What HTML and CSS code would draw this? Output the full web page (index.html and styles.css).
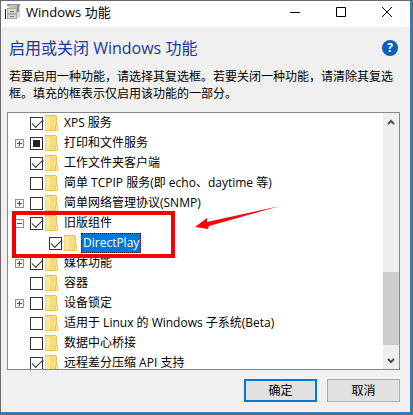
FILE: index.html
```html
<!DOCTYPE html>
<html lang="zh-CN">
<head>
<meta charset="utf-8">
<title>Windows 功能</title>
<link rel="stylesheet" href="styles.css">
</head>
<body>
<svg class="symbols" aria-hidden="true">
  <symbol id="folder" viewBox="0 0 13 17">
    <path fill="#f9da7c" d="M0 1h11v15H0z"/>
    <path fill="#fbe79c" d="M1 2h4v13H1z"/>
    <path fill="#e8c35c" d="M0 0h11v1H0zM0 15h12v1H0zM11 1h1v9h-1z"/>
    <path fill="#f0c95f" d="M10 10h3v6h-3z"/>
    <path fill="#fff0b4" d="M11 11h1v4h-1z"/>
  </symbol>
</svg>
<div class="window">
  <header class="titlebar">
    <svg class="app-icon" viewBox="0 0 16 16" aria-hidden="true">
      <path fill="#d9dcd8" d="M3 0h12v14H3z"/>
      <path fill="#8f96a8" d="M2 0h13v2H2z"/>
      <path fill="#d8c45c" d="M5 1h7v3H5z"/>
      <path fill="#7684b8" d="M12 2h2v6h-2z"/>
      <path fill="#a9abaa" d="M2 4h10v11H2z"/>
      <path fill="#d5d7d5" d="M3 5h8v4H3zM3 11h8v3H3z"/>
      <path fill="#777" d="M5 7h4v1H5zM5 12h4v1H5z"/>
      <path fill="#222" d="M0 5h1v10H0z"/>
    </svg>
    <h1 class="title">Windows 功能</h1>
    <button class="caption" aria-label="最小化"><svg viewBox="0 0 10 10"><path d="M0 5.5h10"/></svg></button>
    <button class="caption" aria-label="最大化"><svg viewBox="0 0 10 10"><path d="M.5.5h9v9h-9z"/></svg></button>
    <button class="caption" aria-label="关闭"><svg viewBox="0 0 10 10"><path d="M0 0l10 10M10 0L0 10"/></svg></button>
  </header>
  <main class="content">
    <div class="heading-row">
      <h2 class="heading">启用或关闭 Windows 功能</h2>
      <button class="help" aria-label="帮助">?</button>
    </div>
    <p class="intro">若要启用一种功能，请选择其复选框。若要关闭一种功能，请清除其复选框。填充的框表示仅启用该功能的一部分。</p>
    <div class="list">
      <ul class="tree">
        <li class="row"><span class="toggle-space"></span><input type="checkbox" id="f1" checked><svg class="folder"><use href="#folder"/></svg><label for="f1">XPS 服务</label></li>
        <li class="row"><button class="toggle plus" aria-label="展开"></button><input type="checkbox" id="f2" class="partial"><svg class="folder"><use href="#folder"/></svg><label for="f2">打印和文件服务</label></li>
        <li class="row"><span class="toggle-space"></span><input type="checkbox" id="f3" checked><svg class="folder"><use href="#folder"/></svg><label for="f3">工作文件夹客户端</label></li>
        <li class="row"><span class="toggle-space"></span><input type="checkbox" id="f4"><svg class="folder"><use href="#folder"/></svg><label for="f4">简单 TCPIP 服务(即 echo、daytime 等)</label></li>
        <li class="row"><button class="toggle plus" aria-label="展开"></button><input type="checkbox" id="f5"><svg class="folder"><use href="#folder"/></svg><label for="f5">简单网络管理协议(SNMP)</label></li>
        <li class="row"><button class="toggle" aria-label="折叠"></button><input type="checkbox" id="f6" checked><svg class="folder"><use href="#folder"/></svg><label for="f6">旧版组件</label></li>
        <li class="row child"><span class="toggle-space"></span><input type="checkbox" id="f7" checked><svg class="folder"><use href="#folder"/></svg><label class="selected" for="f7">DirectPlay</label></li>
        <li class="row"><button class="toggle plus" aria-label="展开"></button><input type="checkbox" id="f8" checked><svg class="folder"><use href="#folder"/></svg><label for="f8">媒体功能</label></li>
        <li class="row"><span class="toggle-space"></span><input type="checkbox" id="f9"><svg class="folder"><use href="#folder"/></svg><label for="f9">容器</label></li>
        <li class="row"><button class="toggle plus" aria-label="展开"></button><input type="checkbox" id="f10"><svg class="folder"><use href="#folder"/></svg><label for="f10">设备锁定</label></li>
        <li class="row"><span class="toggle-space"></span><input type="checkbox" id="f11"><svg class="folder"><use href="#folder"/></svg><label for="f11">适用于 Linux 的 Windows 子系统(Beta)</label></li>
        <li class="row"><span class="toggle-space"></span><input type="checkbox" id="f12"><svg class="folder"><use href="#folder"/></svg><label for="f12">数据中心桥接</label></li>
        <li class="row"><span class="toggle-space"></span><input type="checkbox" id="f13" checked><svg class="folder"><use href="#folder"/></svg><label for="f13">远程差分压缩 API 支持</label></li>
      </ul>
      <div class="scrollbar">
        <button class="scroll-arrow" aria-label="向上滚动"><svg viewBox="0 0 8 6"><path d="M1 5l3-3 3 3"/></svg></button>
        <div class="track"><div class="thumb"></div></div>
        <button class="scroll-arrow" aria-label="向下滚动"><svg viewBox="0 0 8 6"><path d="M1 1l3 3 3-3"/></svg></button>
      </div>
      <div class="highlight"></div>
      <svg class="arrow" viewBox="0 0 86 26" aria-hidden="true"><path fill="#f40606" d="M0 21L12 12L12 16L85 0L14 20L13 23z"/></svg>
    </div>
    <footer class="actions">
      <button class="action primary">确定</button>
      <button class="action">取消</button>
    </footer>
  </main>
</div>
</body>
</html>
```
FILE: styles.css
```css
* {
  box-sizing: border-box;
}

body {
  margin: 0;
  font: 12px/20px "Open Sans", "Noto Sans CJK SC", sans-serif;
  color: #000;
}

button {
  padding: 0;
  border: 0;
  background: none;
  font: inherit;
  color: inherit;
}

.symbols {
  position: absolute;
  width: 0;
  height: 0;
}

.window {
  display: flex;
  flex-direction: column;
  height: 100vh;
  border: solid #69696b;
  border-width: 1px 2px 2px 1px;
  background: #f0f0f0;
}

.titlebar {
  display: flex;
  align-items: center;
  flex: none;
  height: 26px;
  padding: 0 0 4px 4px;
  border-right: 1px solid #2e83c9;
  background: #fff;
}

.app-icon {
  width: 16px;
  height: 16px;
}

.title {
  flex: 1;
  margin: 0 0 0 5px;
  font-size: 13px;
  font-weight: 400;
}

.caption {
  display: grid;
  place-items: center;
  width: 46px;
  height: 22px;
}

.caption svg {
  width: 10px;
  height: 10px;
  overflow: visible;
  fill: none;
  stroke: #000;
}

.content {
  display: flex;
  flex: 1;
  flex-direction: column;
  min-height: 0;
  padding: 10px 10px 10px 6px;
  border: solid #2e83c9;
  border-width: 0 1px 1px 0;
}

.heading-row {
  display: flex;
  align-items: center;
  justify-content: space-between;
  height: 22px;
  padding: 0 2px;
}

.heading {
  margin: 0;
  font-size: 16px;
  font-weight: 400;
  color: #18399c;
}

.help {
  width: 16px;
  height: 16px;
  border-radius: 50%;
  background: #0a5fb8;
  color: #fff;
  font-size: 12px;
  font-weight: 700;
  line-height: 16px;
}

.intro {
  margin: 9px 0 10px;
  padding: 0 2px;
  line-height: 17px;
}

.list {
  position: relative;
  display: flex;
  flex: 1;
  min-height: 0;
  border: 1px solid #828790;
  background: #fff;
  overflow: hidden;
}

.tree {
  flex: 1;
  margin: 0;
  padding: 0 0 0 7px;
  list-style: none;
}

.row {
  display: flex;
  align-items: center;
  height: 20px;
}

.child {
  padding-left: 19px;
}

.toggle,
.toggle-space {
  width: 9px;
  height: 9px;
  margin-right: 6px;
}

.toggle {
  border: 1px solid #919191;
  background: linear-gradient(#35499b, #35499b) center / 5px 1px no-repeat, #fafafa;
}

.plus {
  background: linear-gradient(#35499b, #35499b) center / 5px 1px no-repeat, linear-gradient(#35499b, #35499b) center / 1px 5px no-repeat, #fafafa;
}

.row input {
  appearance: none;
  width: 13px;
  height: 13px;
  margin: 0 2px 0 0;
  border: 1px solid #333;
  background: #fff;
}

.row input:checked::before {
  content: "";
  display: block;
  width: 10px;
  height: 5px;
  margin: 2px 0 0 1px;
  border: solid #333;
  border-width: 0 0 1px 1px;
  transform: translateY(-1px) rotate(-45deg);
}

.row .partial {
  background: linear-gradient(#222, #222) center / 7px 7px no-repeat, #fff;
}

.folder {
  width: 13px;
  height: 17px;
  margin-right: 4px;
}

.row label {
  padding: 0 2px;
  white-space: nowrap;
}

.row .selected {
  background: #0078d7;
  color: #fff;
  outline: 1px dotted #222;
  outline-offset: -1px;
}

.scrollbar {
  display: flex;
  flex-direction: column;
  width: 16px;
  background: #eee;
}

.scroll-arrow {
  display: grid;
  place-items: center;
  height: 17px;
}

.scroll-arrow svg {
  width: 8px;
  height: 6px;
  fill: none;
  stroke: #505050;
  stroke-width: 2;
}

.track {
  display: flex;
  flex: 1;
  flex-direction: column;
  justify-content: flex-end;
  padding-bottom: 7px;
}

.thumb {
  height: 34%;
  background: #cdcdcd;
}

.highlight {
  position: absolute;
  top: 98px;
  left: 4px;
  width: 163px;
  height: 47px;
  border: 4px solid #f40000;
}

.arrow {
  position: absolute;
  top: 93px;
  left: 187px;
  width: 86px;
  height: 26px;
}

.actions {
  display: flex;
  justify-content: flex-end;
  gap: 10px;
  padding-top: 9px;
}

.action {
  width: 73px;
  height: 23px;
  border: 1px solid #adadad;
  background: #e1e1e1;
}

.primary {
  border: 2px solid #0078d7;
}
```
